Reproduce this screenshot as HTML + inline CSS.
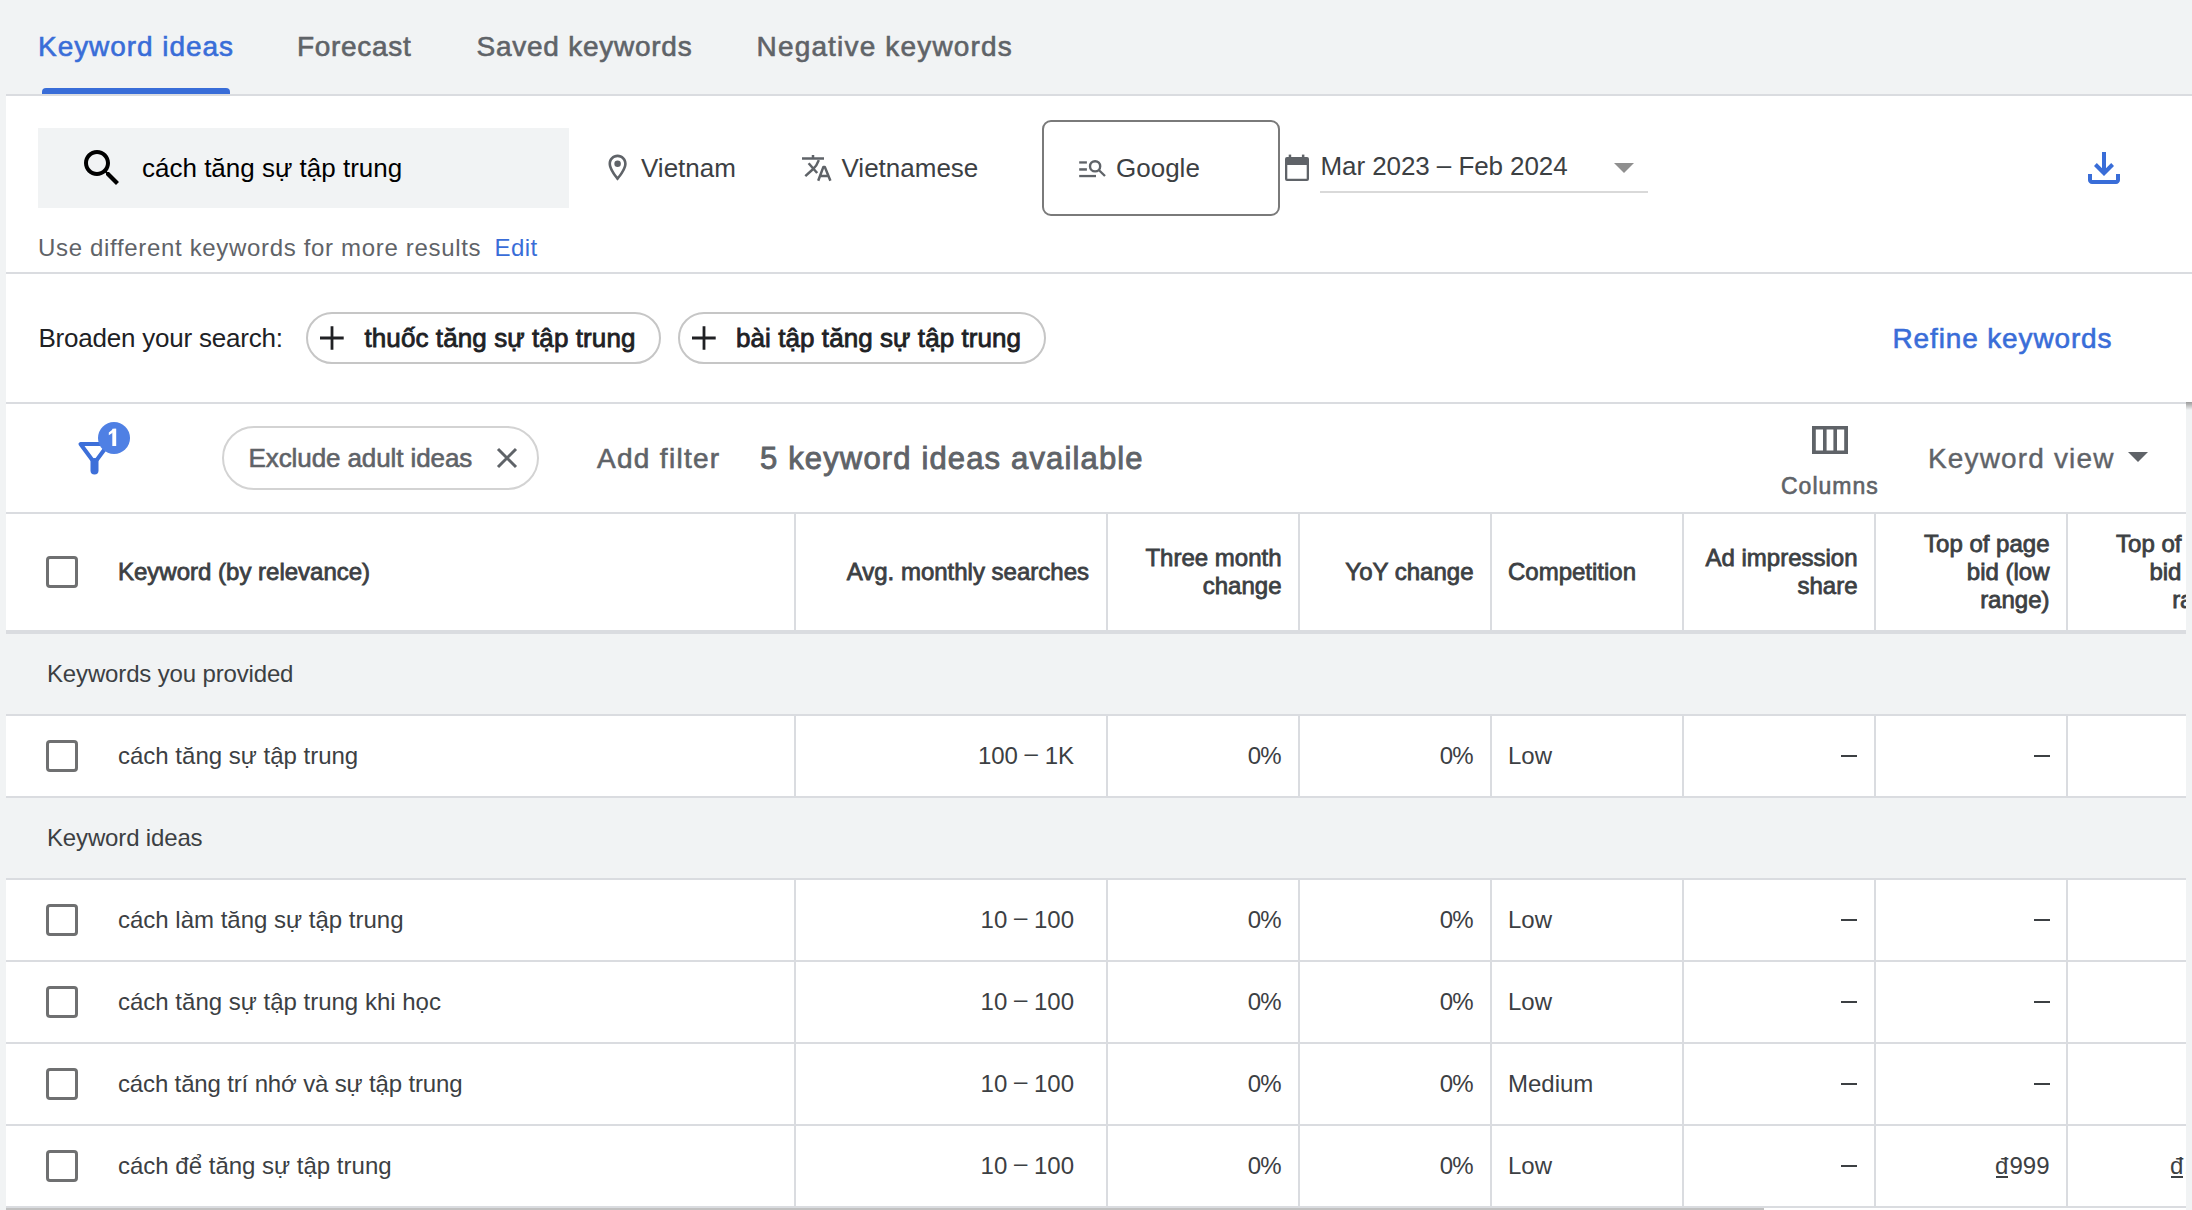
<!DOCTYPE html>
<html><head><meta charset="utf-8">
<style>
*{box-sizing:border-box;margin:0;padding:0}
html,body{width:2192px;height:1210px;overflow:hidden;background:#f1f3f4;font-family:"Liberation Sans",sans-serif;position:relative}
.a{position:absolute;white-space:nowrap}
.t{position:absolute;white-space:nowrap;line-height:1}
.panel{position:absolute;background:#fff}
.hl{position:absolute;background:#dadce0}
svg{position:absolute;overflow:visible}
.dong{position:relative;display:inline-block;margin-right:1px}.dong:after{content:'';position:absolute;left:1px;right:0;bottom:0px;height:2px;background:#3c4043}
.cb{position:absolute;width:32px;height:32px;border:3.7px solid #6f7071;border-radius:4px}
</style></head><body>

<!-- Tabs -->
<div class="t" id="tab1" style="left:38px;top:33px;font-size:28px;letter-spacing:0.95px;color:#396dd8;-webkit-text-stroke:0.6px #396dd8">Keyword ideas</div>
<div class="t" id="tab2" style="left:297px;top:33px;font-size:28px;letter-spacing:0.7px;color:#5f6368;-webkit-text-stroke:0.6px #5f6368">Forecast</div>
<div class="t" id="tab3" style="left:476.5px;top:33px;font-size:28px;letter-spacing:0.75px;color:#5f6368;-webkit-text-stroke:0.6px #5f6368">Saved keywords</div>
<div class="t" id="tab4" style="left:756.5px;top:33px;font-size:28px;letter-spacing:1.17px;color:#5f6368;-webkit-text-stroke:0.6px #5f6368">Negative keywords</div>
<div class="a" style="left:42px;top:88px;width:188px;height:6px;background:#396dd8;border-radius:4px 4px 0 0"></div>

<div class="hl" style="left:6px;top:94px;width:2186px;height:2px"></div>

<!-- Search panel -->
<div class="panel" style="left:6px;top:96px;width:2186px;height:176px"></div>
<div class="hl" style="left:6px;top:272px;width:2186px;height:2px"></div>
<div class="a" style="left:38px;top:128px;width:531px;height:80px;background:#f1f3f4"></div>
<svg style="left:78px;top:144px" width="48" height="48" viewBox="0 0 24 24"><path fill="#000" d="M15.5 14h-.79l-.28-.27C15.41 12.59 16 11.11 16 9.5 16 5.91 13.09 3 9.5 3S3 5.91 3 9.5 5.91 16 9.5 16c1.610 0 3.09-.59 4.23-1.57l.27.28v.79l5 4.99L20.49 19l-4.990-5zm-6 0C7.01 14 5 11.99 5 9.5S7.01 5 9.5 5 14 7.01 14 9.5 11.99 14 9.5 14z"/></svg>
<div class="t" style="left:142px;top:155px;font-size:26px;color:#000">cách tăng sự tập trung</div>

<svg style="left:601.5px;top:152.4px" width="31.2" height="31.2" viewBox="0 0 24 24"><path fill="#5f6368" d="M12 2C8.13 2 5 5.13 5 9c0 5.25 7 13 7 13s7-7.75 7-13c0-3.87-3.13-7-7-7zM7 9c0-2.76 2.24-5 5-5s5 2.24 5 5c0 2.88-2.88 7.19-5 9.88C9.92 16.21 7 11.85 7 9z"/><circle fill="#5f6368" cx="12" cy="9" r="2.5"/></svg>
<div class="t" style="left:641px;top:155px;font-size:26px;color:#3c4043">Vietnam</div>

<svg style="left:796px;top:148px" width="44" height="40" viewBox="0 0 44 40"><g fill="none" stroke="#5f6368" stroke-width="2.5"><path d="M6 10.5H28"/><path d="M17 7V10.5"/><path d="M12.6 15.2L21.2 25"/><path d="M22.8 12.2Q20.8 18 16.9 21.2L9.3 28.1"/><path d="M22.2 32.7L27.4 18.9H28.8L34.4 32.7M24 28.1H32.6" stroke-linejoin="round"/></g></svg>
<div class="t" style="left:841.5px;top:155px;font-size:26px;color:#3c4043">Vietnamese</div>

<div class="a" style="left:1042px;top:120px;width:238px;height:96px;border:2px solid #7a7a7a;border-radius:9px;background:#fff"></div>
<svg style="left:1072px;top:150px" width="40" height="35" viewBox="0 0 40 35"><g fill="#5f6368"><rect x="7.2" y="11.3" width="7.7" height="2.3"/><rect x="7.2" y="18.2" width="7.7" height="2.5"/><rect x="7.2" y="24.9" width="16.8" height="2.3"/></g><g fill="none" stroke="#5f6368" stroke-width="2.4"><circle cx="23.1" cy="16.3" r="5.1"/><path d="M26.8 20L33 26"/></g></svg>
<div class="t" style="left:1116px;top:155px;font-size:26px;color:#3c4043">Google</div>

<svg style="left:1278px;top:146px" width="40" height="40" viewBox="0 0 40 40"><g fill="#5f6368"><path d="M9 11h20a2 2 0 0 1 2 2v20a2 2 0 0 1-2 2H9a2 2 0 0 1-2-2V13a2 2 0 0 1 2-2zm0.3 7.9v13.8h19.4V18.9z"/><rect x="10.7" y="8.6" width="2.5" height="3"/><rect x="23.9" y="8.6" width="2.5" height="3"/></g></svg>
<div class="t" style="left:1320.5px;top:153.3px;font-size:26px;letter-spacing:-0.08px;color:#3c4043">Mar 2023 <span style="position:relative;top:-1px">–</span> Feb 2024</div>
<svg style="left:1614px;top:163px" width="20" height="10" viewBox="0 0 20 10"><path fill="#8f8f8f" d="M0 0H20L10 10z"/></svg>
<div class="a" style="left:1320px;top:191px;width:328px;height:2px;background:#d9d9d9"></div>

<svg style="left:2080px;top:144px" width="48" height="48" viewBox="0 0 24 24"><path fill="#396dd8" d="M12 16l-5-5 1.4-1.45 2.6 2.6V4h2v8.15l2.6-2.6L17 11l-5 5zm-6 4c-.55 0-1.02-.196-1.413-.587A1.926 1.926 0 014 18v-3h2v3h12v-3h2v3c0 .55-.196 1.02-.587 1.413A1.926 1.926 0 0118 20H6z"/></svg>

<div class="t" style="left:38px;top:236px;font-size:24px;letter-spacing:0.67px;color:#5f6368">Use different keywords for more results</div>
<div class="t" style="left:494.5px;top:236px;font-size:24px;letter-spacing:0.4px;color:#396dd8">Edit</div>

<!-- Broaden panel -->
<div class="panel" style="left:6px;top:274px;width:2186px;height:128px"></div>
<div class="hl" style="left:6px;top:402px;width:2186px;height:2px"></div>
<div class="t" style="left:38.5px;top:325px;font-size:26px;letter-spacing:-0.22px;color:#202124">Broaden your search:</div>

<div class="a" style="left:306px;top:312px;width:355px;height:52px;border:2px solid #c6c6c6;border-radius:26px"></div>
<svg style="left:318px;top:325px" width="28" height="26" viewBox="0 0 28 26"><path d="M14 1.3V24.8M2 13H25.7" stroke="#202124" stroke-width="2.8" fill="none"/></svg>
<div class="t" style="left:364.5px;top:325px;font-size:26px;letter-spacing:0.09px;color:#202124;-webkit-text-stroke:0.8px #202124">thuốc tăng sự tập trung</div>

<div class="a" style="left:678px;top:312px;width:368px;height:52px;border:2px solid #c6c6c6;border-radius:26px"></div>
<svg style="left:690px;top:325px" width="28" height="26" viewBox="0 0 28 26"><path d="M14 1.3V24.8M2 13H25.7" stroke="#202124" stroke-width="2.8" fill="none"/></svg>
<div class="t" style="left:736px;top:325px;font-size:26px;letter-spacing:0.07px;color:#202124;-webkit-text-stroke:0.8px #202124">bài tập tăng sự tập trung</div>

<div class="t" style="left:1892.5px;top:325px;font-size:28px;letter-spacing:0.86px;color:#396dd8;-webkit-text-stroke:0.6px #396dd8">Refine keywords</div>

<!-- Toolbar -->
<div class="panel" style="left:6px;top:404px;width:2180px;height:108px"></div>
<svg style="left:60px;top:410px" width="100" height="80" viewBox="0 0 100 80"><path d="M20.5 34H48.5L34.5 53Z" fill="none" stroke="#3d6fd9" stroke-width="4" stroke-linejoin="round"/><path d="M34.5 52V60.5" stroke="#3d6fd9" stroke-width="8" stroke-linecap="round"/><circle cx="54" cy="28" r="16" fill="#4f80e4"/><rect x="52.3" y="18.8" width="3.9" height="17.2" fill="#fff"/><path d="M56.2 18.8H53.6L48.8 22.4V25.2L52.3 23.1Z" fill="#fff"/></svg>

<div class="a" style="left:222px;top:426px;width:317px;height:64px;border:2px solid #d3d3d3;border-radius:32px"></div>
<div class="t" style="left:248.5px;top:445px;font-size:26px;letter-spacing:-0.09px;color:#5f6368;-webkit-text-stroke:0.6px #5f6368">Exclude adult ideas</div>
<svg style="left:497px;top:448px" width="20" height="20" viewBox="0 0 20 20"><path d="M1 1L19 19M19 1L1 19" stroke="#5f6368" stroke-width="3"/></svg>

<div class="t" style="left:597px;top:445px;font-size:28px;letter-spacing:1.3px;color:#5f6368;-webkit-text-stroke:0.6px #5f6368">Add filter</div>
<div class="t" style="left:760px;top:443px;font-size:31px;letter-spacing:1.15px;color:#5f6368;-webkit-text-stroke:0.9px #5f6368">5 keyword ideas available</div>

<svg style="left:1812px;top:426px" width="36" height="28" viewBox="0 0 36 28"><path fill="#5f6368" d="M0 0H36V28H0zM3.8 3.6V24.4H11V3.6zM14.6 3.6V24.4H21.4V3.6zM25 3.6V24.4H32.2V3.6z" fill-rule="evenodd"/></svg>
<div class="t" style="left:1781px;top:475px;font-size:23px;letter-spacing:1px;color:#5f6368;-webkit-text-stroke:0.6px #5f6368">Columns</div>
<div class="t" style="left:1928px;top:444.5px;font-size:28px;letter-spacing:1.15px;color:#5f6368;-webkit-text-stroke:0.4px #5f6368">Keyword view</div>
<svg style="left:2128px;top:452px" width="20" height="10" viewBox="0 0 20 10"><path fill="#5f6368" d="M0 0H20L10 10z"/></svg>

<div class="a" style="left:2186px;top:402px;width:6px;height:8px;background:linear-gradient(#9a9a9a,#f1f3f4)"></div>
<!-- Table -->
<!--TABLE-->
<div id="table" class="a" style="left:6px;top:512px;width:2180px;height:698px;overflow:hidden;background:#fff">
<div class="a" style="left:0px;top:0px;width:2180px;height:2px;background:#dadce0"></div>
<div class="a" style="left:788px;top:2px;width:2px;height:116px;background:#dadce0"></div>
<div class="a" style="left:1100px;top:2px;width:2px;height:116px;background:#dadce0"></div>
<div class="a" style="left:1292px;top:2px;width:2px;height:116px;background:#dadce0"></div>
<div class="a" style="left:1484px;top:2px;width:2px;height:116px;background:#dadce0"></div>
<div class="a" style="left:1676px;top:2px;width:2px;height:116px;background:#dadce0"></div>
<div class="a" style="left:1868px;top:2px;width:2px;height:116px;background:#dadce0"></div>
<div class="a" style="left:2060px;top:2px;width:2px;height:116px;background:#dadce0"></div>
<div class="a" style="left:0px;top:118px;width:2180px;height:4px;background:#dadce0"></div>
<div class="cb" style="left:40px;top:44px"></div>
<div class="t" style="left:112.0px;top:47.7px;font-size:24px;color:#3c4043;-webkit-text-stroke:0.8px #3c4043;">Keyword (by relevance)</div>
<div class="t" style="right:1097.0px;top:47.7px;font-size:24px;color:#3c4043;text-align:right;-webkit-text-stroke:0.8px #3c4043;">Avg. monthly searches</div>
<div class="a" style="right:904.5px;top:31.7px;font-size:24px;line-height:28px;color:#3c4043;text-align:right;-webkit-text-stroke:0.8px #3c4043;">Three month<br>change</div>
<div class="t" style="right:712.5px;top:47.7px;font-size:24px;color:#3c4043;text-align:right;-webkit-text-stroke:0.8px #3c4043;">YoY change</div>
<div class="t" style="left:1502.0px;top:47.7px;font-size:24px;color:#3c4043;-webkit-text-stroke:0.8px #3c4043;">Competition</div>
<div class="a" style="right:328.5px;top:31.7px;font-size:24px;line-height:28px;color:#3c4043;text-align:right;-webkit-text-stroke:0.8px #3c4043;">Ad impression<br>share</div>
<div class="a" style="right:136.5px;top:17.7px;font-size:24px;line-height:28px;color:#3c4043;text-align:right;-webkit-text-stroke:0.8px #3c4043;">Top of page<br>bid (low<br>range)</div>
<div class="a" style="right:-55.5px;top:17.7px;font-size:24px;line-height:28px;color:#3c4043;text-align:right;-webkit-text-stroke:0.8px #3c4043;">Top of page<br>bid (high<br>range)</div>
<div class="a" style="left:0px;top:122px;width:2180px;height:80px;background:#f1f3f4"></div>
<div class="a" style="left:0px;top:202px;width:2180px;height:2px;background:#dadce0"></div>
<div class="t" style="left:41.0px;top:150.2px;font-size:24px;color:#3c4043;letter-spacing:-0.15px;">Keywords you provided</div>
<div class="a" style="left:0px;top:286px;width:2180px;height:80px;background:#f1f3f4"></div>
<div class="a" style="left:0px;top:366px;width:2180px;height:2px;background:#dadce0"></div>
<div class="t" style="left:41.0px;top:314.2px;font-size:24px;color:#3c4043;letter-spacing:-0.15px;">Keyword ideas</div>
<div class="a" style="left:788px;top:204px;width:2px;height:80px;background:#dadce0"></div>
<div class="a" style="left:1100px;top:204px;width:2px;height:80px;background:#dadce0"></div>
<div class="a" style="left:1292px;top:204px;width:2px;height:80px;background:#dadce0"></div>
<div class="a" style="left:1484px;top:204px;width:2px;height:80px;background:#dadce0"></div>
<div class="a" style="left:1676px;top:204px;width:2px;height:80px;background:#dadce0"></div>
<div class="a" style="left:1868px;top:204px;width:2px;height:80px;background:#dadce0"></div>
<div class="a" style="left:2060px;top:204px;width:2px;height:80px;background:#dadce0"></div>
<div class="a" style="left:0px;top:284px;width:2180px;height:2px;background:#dadce0"></div>
<div class="cb" style="left:40px;top:228px"></div>
<div class="t" style="left:112.0px;top:231.7px;font-size:24px;color:#3c4043;">cách tăng sự tập trung</div>
<div class="t" style="right:1112.0px;top:231.7px;font-size:24px;color:#3c4043;text-align:right;">100 <span style="position:relative;top:-2.5px">–</span> 1K</div>
<div class="t" style="right:905.5px;top:231.7px;font-size:24px;color:#3c4043;text-align:right;letter-spacing:-1px;">0%</div>
<div class="t" style="right:713.5px;top:231.7px;font-size:24px;color:#3c4043;text-align:right;letter-spacing:-1px;">0%</div>
<div class="t" style="left:1502.0px;top:231.7px;font-size:24px;color:#3c4043;">Low</div>
<div class="a" style="left:1835px;top:243px;width:16px;height:2px;background:#3c4043"></div>
<div class="a" style="left:2027.5px;top:243px;width:16px;height:2px;background:#3c4043"></div>
<div class="a" style="left:2222.5px;top:243px;width:16px;height:2px;background:#3c4043"></div>
<div class="a" style="left:788px;top:368px;width:2px;height:80px;background:#dadce0"></div>
<div class="a" style="left:1100px;top:368px;width:2px;height:80px;background:#dadce0"></div>
<div class="a" style="left:1292px;top:368px;width:2px;height:80px;background:#dadce0"></div>
<div class="a" style="left:1484px;top:368px;width:2px;height:80px;background:#dadce0"></div>
<div class="a" style="left:1676px;top:368px;width:2px;height:80px;background:#dadce0"></div>
<div class="a" style="left:1868px;top:368px;width:2px;height:80px;background:#dadce0"></div>
<div class="a" style="left:2060px;top:368px;width:2px;height:80px;background:#dadce0"></div>
<div class="a" style="left:0px;top:448px;width:2180px;height:2px;background:#dadce0"></div>
<div class="cb" style="left:40px;top:392px"></div>
<div class="t" style="left:112.0px;top:395.7px;font-size:24px;color:#3c4043;">cách làm tăng sự tập trung</div>
<div class="t" style="right:1112.0px;top:395.7px;font-size:24px;color:#3c4043;text-align:right;">10 <span style="position:relative;top:-2.5px">–</span> 100</div>
<div class="t" style="right:905.5px;top:395.7px;font-size:24px;color:#3c4043;text-align:right;letter-spacing:-1px;">0%</div>
<div class="t" style="right:713.5px;top:395.7px;font-size:24px;color:#3c4043;text-align:right;letter-spacing:-1px;">0%</div>
<div class="t" style="left:1502.0px;top:395.7px;font-size:24px;color:#3c4043;">Low</div>
<div class="a" style="left:1835px;top:407px;width:16px;height:2px;background:#3c4043"></div>
<div class="a" style="left:2027.5px;top:407px;width:16px;height:2px;background:#3c4043"></div>
<div class="a" style="left:2222.5px;top:407px;width:16px;height:2px;background:#3c4043"></div>
<div class="a" style="left:788px;top:450px;width:2px;height:80px;background:#dadce0"></div>
<div class="a" style="left:1100px;top:450px;width:2px;height:80px;background:#dadce0"></div>
<div class="a" style="left:1292px;top:450px;width:2px;height:80px;background:#dadce0"></div>
<div class="a" style="left:1484px;top:450px;width:2px;height:80px;background:#dadce0"></div>
<div class="a" style="left:1676px;top:450px;width:2px;height:80px;background:#dadce0"></div>
<div class="a" style="left:1868px;top:450px;width:2px;height:80px;background:#dadce0"></div>
<div class="a" style="left:2060px;top:450px;width:2px;height:80px;background:#dadce0"></div>
<div class="a" style="left:0px;top:530px;width:2180px;height:2px;background:#dadce0"></div>
<div class="cb" style="left:40px;top:474px"></div>
<div class="t" style="left:112.0px;top:477.7px;font-size:24px;color:#3c4043;">cách tăng sự tập trung khi học</div>
<div class="t" style="right:1112.0px;top:477.7px;font-size:24px;color:#3c4043;text-align:right;">10 <span style="position:relative;top:-2.5px">–</span> 100</div>
<div class="t" style="right:905.5px;top:477.7px;font-size:24px;color:#3c4043;text-align:right;letter-spacing:-1px;">0%</div>
<div class="t" style="right:713.5px;top:477.7px;font-size:24px;color:#3c4043;text-align:right;letter-spacing:-1px;">0%</div>
<div class="t" style="left:1502.0px;top:477.7px;font-size:24px;color:#3c4043;">Low</div>
<div class="a" style="left:1835px;top:489px;width:16px;height:2px;background:#3c4043"></div>
<div class="a" style="left:2027.5px;top:489px;width:16px;height:2px;background:#3c4043"></div>
<div class="a" style="left:2222.5px;top:489px;width:16px;height:2px;background:#3c4043"></div>
<div class="a" style="left:788px;top:532px;width:2px;height:80px;background:#dadce0"></div>
<div class="a" style="left:1100px;top:532px;width:2px;height:80px;background:#dadce0"></div>
<div class="a" style="left:1292px;top:532px;width:2px;height:80px;background:#dadce0"></div>
<div class="a" style="left:1484px;top:532px;width:2px;height:80px;background:#dadce0"></div>
<div class="a" style="left:1676px;top:532px;width:2px;height:80px;background:#dadce0"></div>
<div class="a" style="left:1868px;top:532px;width:2px;height:80px;background:#dadce0"></div>
<div class="a" style="left:2060px;top:532px;width:2px;height:80px;background:#dadce0"></div>
<div class="a" style="left:0px;top:612px;width:2180px;height:2px;background:#dadce0"></div>
<div class="cb" style="left:40px;top:556px"></div>
<div class="t" style="left:112.0px;top:559.7px;font-size:24px;color:#3c4043;letter-spacing:-0.15px;">cách tăng trí nhớ và sự tập trung</div>
<div class="t" style="right:1112.0px;top:559.7px;font-size:24px;color:#3c4043;text-align:right;">10 <span style="position:relative;top:-2.5px">–</span> 100</div>
<div class="t" style="right:905.5px;top:559.7px;font-size:24px;color:#3c4043;text-align:right;letter-spacing:-1px;">0%</div>
<div class="t" style="right:713.5px;top:559.7px;font-size:24px;color:#3c4043;text-align:right;letter-spacing:-1px;">0%</div>
<div class="t" style="left:1502.0px;top:559.7px;font-size:24px;color:#3c4043;">Medium</div>
<div class="a" style="left:1835px;top:571px;width:16px;height:2px;background:#3c4043"></div>
<div class="a" style="left:2027.5px;top:571px;width:16px;height:2px;background:#3c4043"></div>
<div class="a" style="left:2222.5px;top:571px;width:16px;height:2px;background:#3c4043"></div>
<div class="a" style="left:788px;top:614px;width:2px;height:80px;background:#dadce0"></div>
<div class="a" style="left:1100px;top:614px;width:2px;height:80px;background:#dadce0"></div>
<div class="a" style="left:1292px;top:614px;width:2px;height:80px;background:#dadce0"></div>
<div class="a" style="left:1484px;top:614px;width:2px;height:80px;background:#dadce0"></div>
<div class="a" style="left:1676px;top:614px;width:2px;height:80px;background:#dadce0"></div>
<div class="a" style="left:1868px;top:614px;width:2px;height:80px;background:#dadce0"></div>
<div class="a" style="left:2060px;top:614px;width:2px;height:80px;background:#dadce0"></div>
<div class="a" style="left:0px;top:694px;width:2180px;height:2px;background:#dadce0"></div>
<div class="cb" style="left:40px;top:638px"></div>
<div class="t" style="left:112.0px;top:641.7px;font-size:24px;color:#3c4043;">cách để tăng sự tập trung</div>
<div class="t" style="right:1112.0px;top:641.7px;font-size:24px;color:#3c4043;text-align:right;">10 <span style="position:relative;top:-2.5px">–</span> 100</div>
<div class="t" style="right:905.5px;top:641.7px;font-size:24px;color:#3c4043;text-align:right;letter-spacing:-1px;">0%</div>
<div class="t" style="right:713.5px;top:641.7px;font-size:24px;color:#3c4043;text-align:right;letter-spacing:-1px;">0%</div>
<div class="t" style="left:1502.0px;top:641.7px;font-size:24px;color:#3c4043;">Low</div>
<div class="a" style="left:1835px;top:653px;width:16px;height:2px;background:#3c4043"></div>
<div class="t" style="right:136.5px;top:641.7px;font-size:24px;color:#3c4043;text-align:right;"><span class="dong">đ</span>999</div>
<div class="t" style="right:-58.5px;top:641.7px;font-size:24px;color:#3c4043;text-align:right;"><span class="dong">đ</span>1.000</div>
<div class="a" style="left:0px;top:696px;width:1758px;height:2px;background:#c1c1c1"></div>
</div>
<!--/TABLE-->
</body></html>
